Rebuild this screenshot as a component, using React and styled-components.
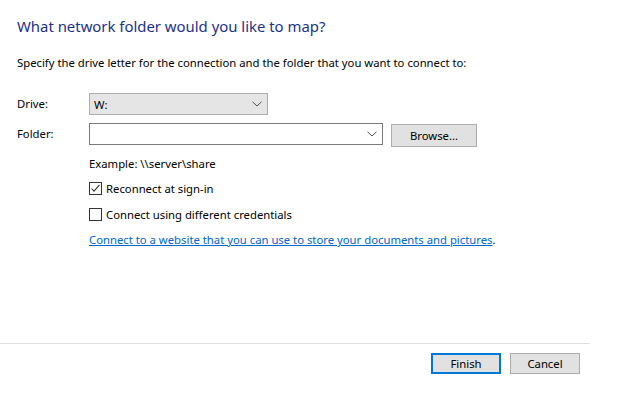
import React from "react";
import styled, { createGlobalStyle } from "styled-components";

const Global = createGlobalStyle`
  html, body { margin: 0; padding: 0; background: #ffffff; }
  body { font-family: "Noto Sans", "Open Sans", sans-serif; font-size: 11.3px; color: #000; }
`;

const Window = styled.div`
  width: 642px;
  height: 396px;
  display: flex;
  flex-direction: column;
  background: #fff;
  overflow: hidden;
`;

const Content = styled.div`
  flex: 1;
  padding: 16px 0 0 17px;
  display: flex;
  flex-direction: column;
`;

const Title = styled.h1`
  margin: 0;
  font-size: 14.9px;
  font-weight: 400;
  line-height: 21px;
  color: #1e3287;
`;

const Description = styled.p`
  margin: 18px 0 0 0;
  line-height: 16px;
`;

const Form = styled.div`
  margin-top: 22px;
  display: grid;
  grid-template-columns: 72px auto;
  row-gap: 8px;
  align-items: start;
`;

const Label = styled.div`
  line-height: 22px;
`;

const FieldRow = styled.div`
  display: flex;
  align-items: flex-start;
  gap: 8px;
`;

const Combo = styled.div`
  box-sizing: border-box;
  width: ${(p) => p.$width}px;
  height: 22px;
  display: flex;
  align-items: center;
  justify-content: space-between;
  padding: 0 5px 0 4px;
  border: 1px solid ${(p) => (p.$editable ? "#7a7a7a" : "#adadad")};
  background: ${(p) => (p.$editable ? "#ffffff" : "#e5e5e5")};
`;

const Button = styled.button`
  box-sizing: border-box;
  width: ${(p) => p.$width}px;
  height: ${(p) => p.$height}px;
  margin-top: ${(p) => p.$offset || 0}px;
  padding: 0;
  font: inherit;
  color: #000;
  background: #e1e1e1;
  border: ${(p) => (p.$default ? "2px solid #0078d7" : "1px solid #adadad")};
  display: flex;
  align-items: center;
  justify-content: center;
`;

const Options = styled.div`
  grid-column: 2;
  display: flex;
  flex-direction: column;
`;

const Example = styled.div`
  margin-top: 1px;
  line-height: 16px;
`;

const CheckRow = styled.label`
  display: flex;
  align-items: center;
  gap: 4px;
  height: 16px;
  margin-top: ${(p) => p.$gap}px;
`;

const Box = styled.span`
  box-sizing: border-box;
  width: 13px;
  height: 13px;
  border: 1px solid #333333;
  background: #fff;
  display: flex;
  align-items: center;
  justify-content: center;
`;

const LinkLine = styled.div`
  margin-top: 10px;
  line-height: 16px;
  a { color: #0066cc; text-decoration: underline; }
`;

const Footer = styled.div`
  width: 590px;
  box-sizing: border-box;
  border-top: 1px solid #dfdfdf;
  padding: 9px 10px 22px 0;
  display: flex;
  justify-content: flex-end;
  gap: 9px;
`;

const Chevron = () => (
  <svg width="10" height="6" viewBox="0 0 10 6">
    <path d="M0.5 0.8 L5 5 L9.5 0.8" fill="none" stroke="#555" strokeWidth="1" />
  </svg>
);

const Check = () => (
  <svg width="11" height="11" viewBox="0 0 11 11">
    <path d="M1.5 5.5 L4 8.2 L9.5 1.8" fill="none" stroke="#333" strokeWidth="1.1" />
  </svg>
);

export default function App() {
  return (
    <>
      <Global />
      <Window>
        <Content>
          <Title>What network folder would you like to map?</Title>
          <Description>
            Specify the drive letter for the connection and the folder that you want to connect to:
          </Description>
          <Form>
            <Label>Drive:</Label>
            <FieldRow>
              <Combo $width={179}>
                <span>W:</span>
                <Chevron />
              </Combo>
            </FieldRow>
            <Label>Folder:</Label>
            <FieldRow>
              <Combo $width={294} $editable>
                <span></span>
                <Chevron />
              </Combo>
              <Button $width={86} $height={23} $offset={1}>Browse...</Button>
            </FieldRow>
            <Options>
              <Example>Example: \\server\share</Example>
              <CheckRow $gap={8}>
                <Box><Check /></Box>
                Reconnect at sign-in
              </CheckRow>
              <CheckRow $gap={10}>
                <Box />
                Connect using different credentials
              </CheckRow>
              <LinkLine>
                <a href="#">Connect to a website that you can use to store your documents and pictures</a>.
              </LinkLine>
            </Options>
          </Form>
        </Content>
        <Footer>
          <Button $width={70} $height={21} $default>Finish</Button>
          <Button $width={70} $height={21}>Cancel</Button>
        </Footer>
      </Window>
    </>
  );
}
